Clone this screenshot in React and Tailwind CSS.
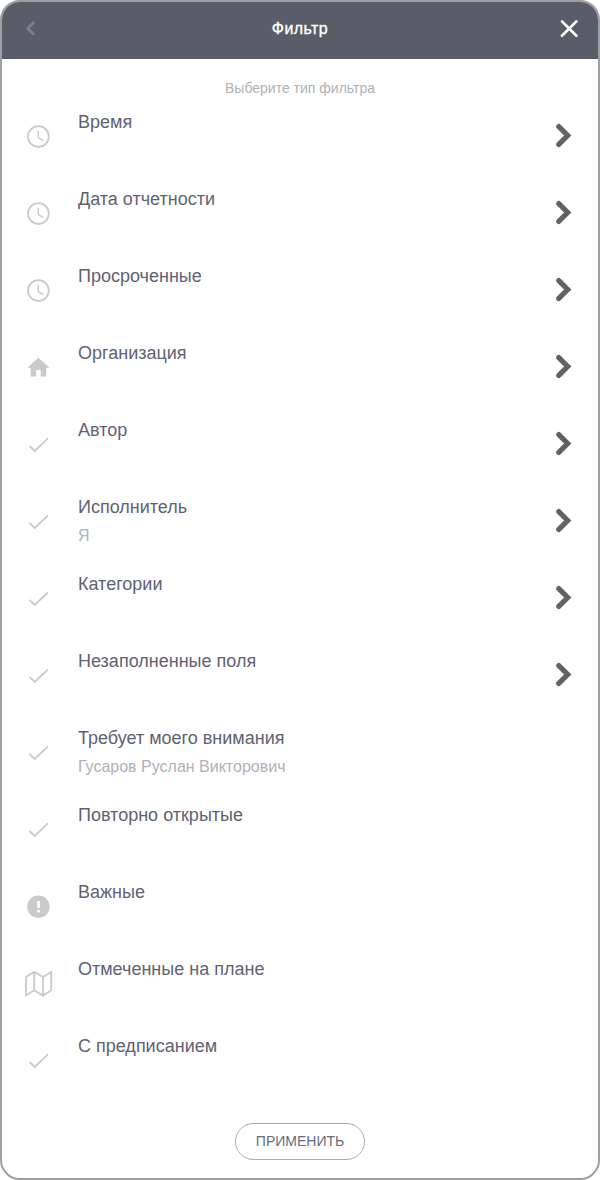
const icons = {
  clock: (
    <g fill="none" stroke="#cacaca">
      <circle cx="16.4" cy="15.6" r="10.4" strokeWidth="1.8" />
      <path d="M16.3 9.7v6.8l5.2 3.2" strokeWidth="1.4" />
    </g>
  ),
  home: (
    <path
      transform="translate(3.1 2.4) scale(1.11)"
      d="M10 20v-6h4v6h5v-8h3L12 3 2 12h3v8z"
      fill="#cacaca"
    />
  ),
  check: <path d="M7.5 16.9l5.2 5L26 9.4" fill="none" stroke="#cacaca" strokeWidth="1.9" />,
  alert: (
    <g>
      <circle cx="16.4" cy="15.7" r="11.2" fill="#cacaca" />
      <path d="M15.1 10h2.8v7h-2.8zM15.1 19h2.8v2.6h-2.8z" fill="#fff" />
    </g>
  ),
  map: (
    <path
      d="M4 9L12.2 3.7l8.8 5.3L29.2 4V22.2L21 27.6l-8.8-5.3L4 27.4zM12.2 3.7v18.6M21 9V27.6"
      fill="none"
      stroke="#cacaca"
      strokeWidth="1.8"
    />
  ),
};

const filters = [
  { icon: "clock", title: "Время", nested: true },
  { icon: "clock", title: "Дата отчетности", nested: true },
  { icon: "clock", title: "Просроченные", nested: true },
  { icon: "home", title: "Организация", nested: true },
  { icon: "check", title: "Автор", nested: true },
  { icon: "check", title: "Исполнитель", value: "Я", nested: true },
  { icon: "check", title: "Категории", nested: true },
  { icon: "check", title: "Незаполненные поля", nested: true },
  { icon: "check", title: "Требует моего внимания", value: "Гусаров Руслан Викторович" },
  { icon: "check", title: "Повторно открытые" },
  { icon: "alert", title: "Важные" },
  { icon: "map", title: "Отмеченные на плане" },
  { icon: "check", title: "С предписанием" },
];

function Row({ icon, title, value, nested }) {
  return (
    <li className="flex h-[77px] items-start pl-5 pr-6">
      <svg className="mt-[22px] h-8 w-8 shrink-0" viewBox="0 0 32 32">
        {icons[icon]}
      </svg>
      <div className="ml-6 flex-1 pt-[11px]">
        <div className="text-[18px] leading-6 text-[#5f6272]">{title}</div>
        {value && <div className="mt-[5px] text-base leading-6 text-[#b0b1b8]">{value}</div>}
      </div>
      {nested && (
        <svg className="mt-6 h-[26px] w-5 shrink-0" viewBox="0 0 20 26">
          <path d="M4.8 3.6L13.7 12.5L4.8 21.4" fill="none" stroke="#626262" strokeWidth="5.2" strokeLinecap="round" />
        </svg>
      )}
    </li>
  );
}

export default function App() {
  return (
    <div className="flex h-[1180px] w-[600px] flex-col overflow-hidden rounded-[20px] border-2 border-[#a29d9e] bg-white font-['Liberation_Sans',Arial,sans-serif]">
      <header className="flex h-[57px] shrink-0 items-center justify-between bg-[#595d69] pb-1 pl-[17px] pr-[17px]">
        <button aria-label="Назад" className="w-6">
          <svg className="h-6 w-6" viewBox="0 0 24 24">
            <path d="M15.2 5L8.7 11.4l6.5 6.4" fill="none" stroke="#7c7e89" strokeWidth="2.9" />
          </svg>
        </button>
        <h1 className="text-base leading-6 tracking-[0.45px] text-white [-webkit-text-stroke:0.35px_white]">Фильтр</h1>
        <button aria-label="Закрыть" className="w-6">
          <svg className="h-6 w-6" viewBox="0 0 24 24">
            <path d="M5 4.4l14.4 14.4M19.4 4.4L5 18.8" stroke="#fff" strokeWidth="2.7" strokeLinecap="round" />
          </svg>
        </button>
      </header>
      <p className="h-10 shrink-0 pt-[19px] text-center text-sm leading-5 text-[#b0b1b8]">Выберите тип фильтра</p>
      <ul>
        {filters.map((filter) => (
          <Row key={filter.title} {...filter} />
        ))}
      </ul>
      <button className="mt-[23px] h-[37px] w-[130px] shrink-0 self-center rounded-full border border-[#a9a9b1] pb-0.5 text-sm text-[#696b79]">
        ПРИМЕНИТЬ
      </button>
    </div>
  );
}
